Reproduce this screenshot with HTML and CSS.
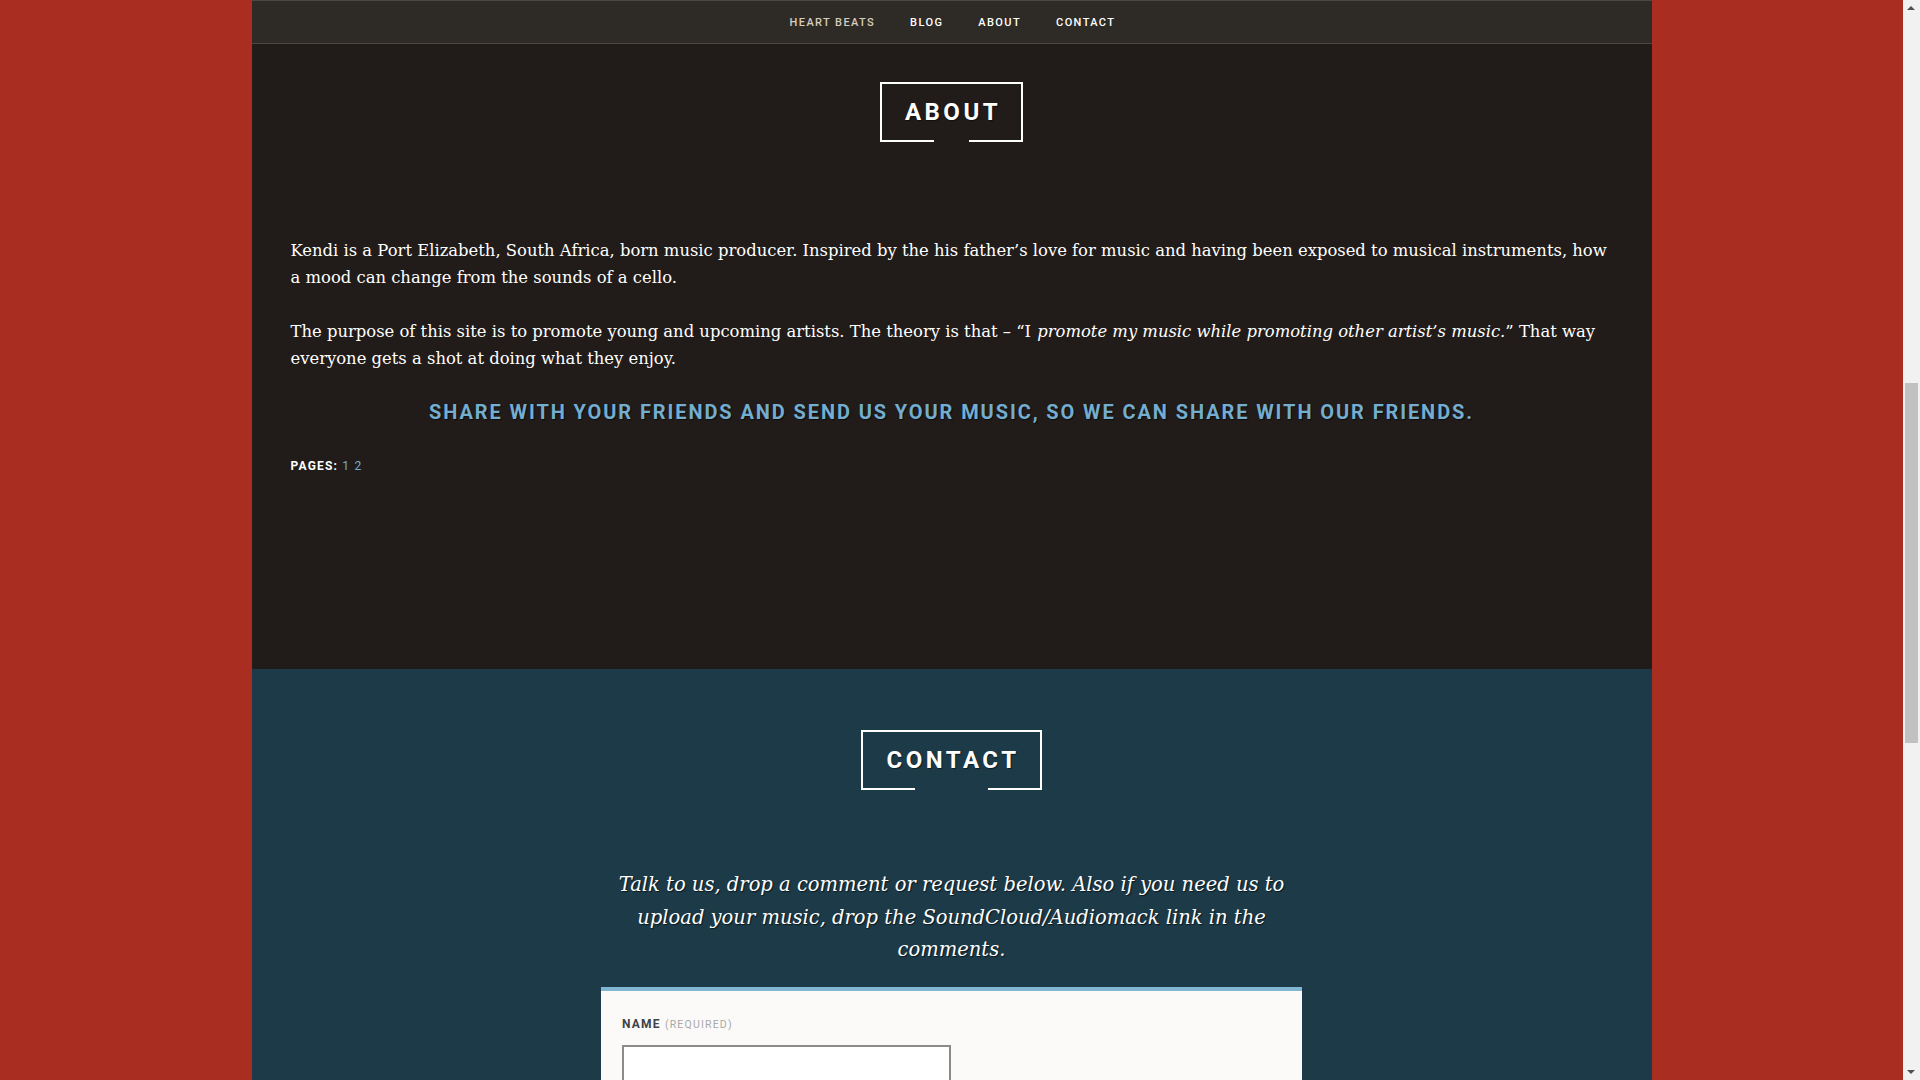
FILE: index.html
```html
<!DOCTYPE html>
<html lang="en">
<head>
<meta charset="utf-8">
<title>Heart Beats – About</title>
<link rel="stylesheet" href="styles.css">
</head>
<body>
<div class="page">
  <nav class="topnav">
    <a class="nav-link nav-home" href="#">Heart Beats</a>
    <a class="nav-link" href="#">Blog</a>
    <a class="nav-link" href="#">About</a>
    <a class="nav-link" href="#">Contact</a>
  </nav>

  <section class="about">
    <div class="title-wrap"><h2 class="boxed-title">About</h2></div>
    <div class="about-body">
      <p>Kendi is a Port Elizabeth, South Africa, born music producer. Inspired by the his father’s love for music and having been exposed to musical instruments, how a mood can change from the sounds of a cello.</p>
      <p>The purpose of this site is to promote young and upcoming artists. The theory is that – “I <em>promote my music while promoting other artist’s music.</em>” That way everyone gets a shot at doing what they enjoy.</p>
      <h3 class="share">Share with your friends and send us your music, so we can share with our friends.</h3>
      <div class="pages">Pages: <a href="#">1</a> <a href="#">2</a></div>
    </div>
  </section>

  <section class="contact">
    <div class="title-wrap"><h2 class="boxed-title">Contact</h2></div>
    <div class="contact-inner">
      <p class="contact-intro">Talk to us, drop a comment or request below. Also if you need us to upload your music, drop the SoundCloud/Audiomack link in the comments.</p>
      <form class="contact-form">
        <label class="field-label">Name <span class="req">(required)</span></label>
        <input class="field-input" type="text">
        <label class="field-label">Email <span class="req">(required)</span></label>
        <input class="field-input" type="text">
        <label class="field-label">Website</label>
        <input class="field-input" type="text">
        <label class="field-label">Comment <span class="req">(required)</span></label>
        <textarea class="field-area"></textarea>
      </form>
    </div>
  </section>
</div>

<div class="fake-scrollbar" aria-hidden="true">
  <span class="sb-arrow sb-up"></span>
  <span class="sb-thumb"></span>
  <span class="sb-arrow sb-down"></span>
</div>
</body>
</html>
```
FILE: styles.css
```css
html, body {
  margin: 0;
  padding: 0;
}
html {
  overflow: hidden;
}
body {
  background: #a92d20;
  font-family: "DejaVu Serif", "Liberation Serif", serif;
  padding-right: 17px;
}
.page {
  width: 1400px;
  margin: 0 auto;
}
.topnav {
  height: 42px;
  background: #2e2a25;
  border-top: 1px solid #4a4742;
  border-bottom: 1px solid #4a4742;
  display: flex;
  justify-content: center;
  align-items: center;
  gap: 35px;
  padding-left: 2px;
}
.nav-link {
  font-family: Roboto, "Liberation Sans", sans-serif;
  font-size: 11px;
  font-weight: 500;
  letter-spacing: 1.4px;
  text-transform: uppercase;
  color: #ffffff;
  text-decoration: none;
}
.nav-home {
  color: #d6cdbf;
}
.about {
  background: #211c19;
  padding: 38px 0 0;
  height: 625px;
  box-sizing: border-box;
}
.title-wrap {
  display: flex;
  justify-content: center;
}
.boxed-title {
  position: relative;
  margin: 0;
  font-family: Roboto, "Liberation Sans", sans-serif;
  font-weight: 700;
  font-size: 24px;
  letter-spacing: 3.5px;
  text-transform: uppercase;
  color: #ffffff;
  height: 56px;
  line-height: 56px;
  padding: 0 20px 0 23px;
  border: 2px solid #ffffff;
  border-bottom: none;
  text-shadow: 1px 1px 1px rgba(0,0,0,0.5);
}
.boxed-title::before,
.boxed-title::after {
  content: "";
  position: absolute;
  bottom: -2px;
  width: 54px;
  height: 2px;
  background: #ffffff;
}
.boxed-title::before { left: -2px; }
.boxed-title::after { right: -2px; }
.about-body {
  padding: 97px 39px 0;
  color: #ffffff;
}
.about-body p {
  margin: 0 0 27px;
  font-size: 16.4px;
  line-height: 27px;
}
.about-body em {
  padding-left: 1px;
}
.share {
  margin: 0 0 34px;
  text-align: center;
  font-family: Roboto, "Liberation Sans", sans-serif;
  font-weight: 700;
  font-size: 20px;
  letter-spacing: 1.9px;
  text-transform: uppercase;
  color: #73add0;
  line-height: 26px;
  text-shadow: 1px 1px 1px rgba(0,0,0,0.6);
}
.pages {
  font-family: Roboto, "Liberation Sans", sans-serif;
  font-size: 12px;
  font-weight: 700;
  letter-spacing: 1.2px;
  text-transform: uppercase;
  color: #ffffff;
}
.pages a {
  color: #73add0;
  text-decoration: none;
  font-weight: 400;
}
.contact {
  background: #1c3a48;
  padding: 61px 0 200px;
}
.contact-inner {
  width: 701px;
  margin: 0 auto;
  padding-top: 81px;
}
.contact-intro {
  margin: 0 0 20px;
  text-align: center;
  font-style: italic;
  font-size: 19.5px;
  line-height: 32.5px;
  color: #ffffff;
  text-shadow: 1px 1px 1px rgba(0,0,0,0.6);
}
.contact-form {
  background: #fbfaf9;
  border-top: 4px solid #80b6d1;
  padding: 26px 21px 30px;
  display: flex;
  flex-direction: column;
  align-items: flex-start;
}
.field-label {
  font-family: Roboto, "Liberation Sans", sans-serif;
  font-size: 12px;
  font-weight: 700;
  letter-spacing: 1.2px;
  text-transform: uppercase;
  color: #3f4245;
  margin-bottom: 14px;
}
.req {
  font-weight: 400;
  font-size: 10.5px;
  color: #a8a8a8;
}
.field-input {
  width: 325px;
  height: 40px;
  border: 2px solid #8b8b8b;
  background: #ffffff;
  margin: 0 0 24px;
  padding: 0;
}
.field-area {
  width: 640px;
  height: 200px;
  border: 2px solid #8b8b8b;
  background: #ffffff;
  padding: 0;
}
.fake-scrollbar {
  position: fixed;
  top: 0;
  right: 0;
  width: 17px;
  height: 100vh;
  background: #f1f1f1;
}
.sb-thumb {
  position: absolute;
  left: 2px;
  right: 2px;
  top: 383px;
  height: 360px;
  background: #c1c1c1;
}
.sb-arrow {
  position: absolute;
  left: 4px;
  width: 0;
  height: 0;
  border-left: 4px solid transparent;
  border-right: 4px solid transparent;
}
.sb-up {
  top: 6px;
  border-bottom: 4px solid #505050;
}
.sb-down {
  bottom: 6px;
  border-top: 4px solid #505050;
}
```
